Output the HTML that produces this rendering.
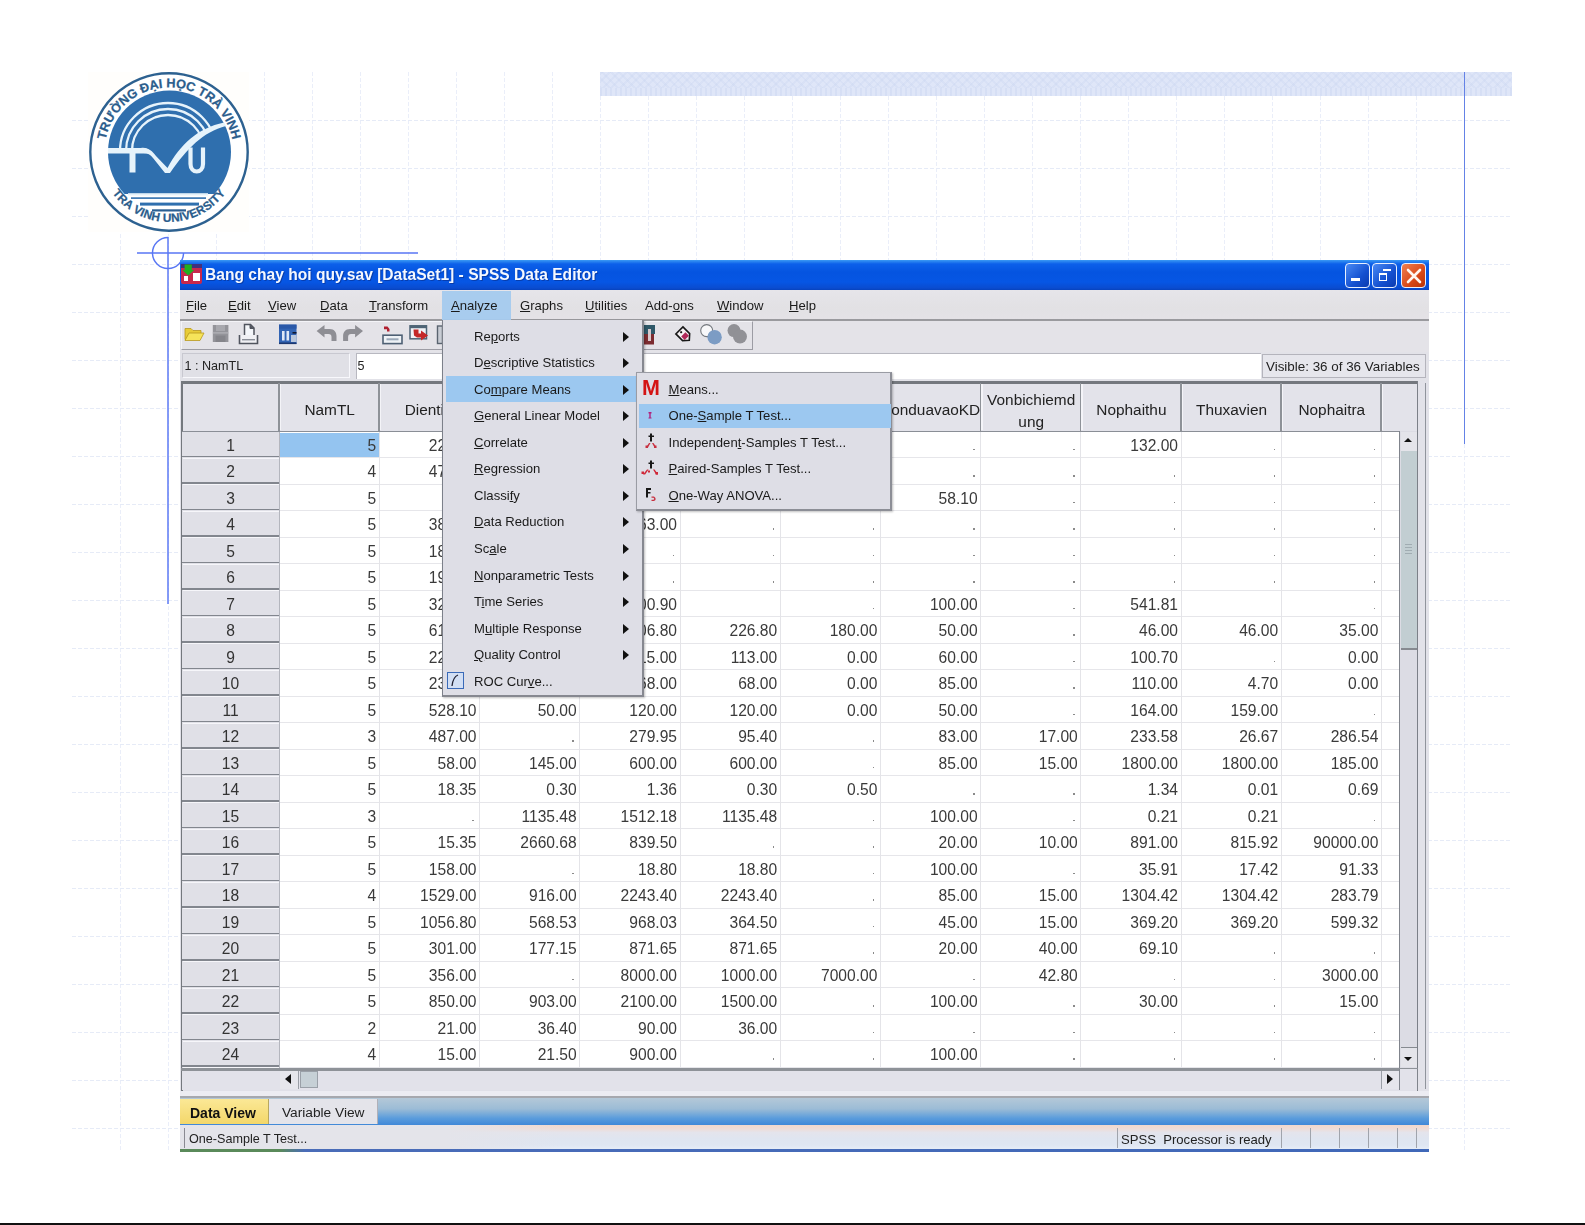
<!DOCTYPE html>
<html><head><meta charset="utf-8"><title>slide</title>
<style>
html,body{margin:0;padding:0;background:#fff;}
body{width:1585px;height:1225px;overflow:hidden;position:relative;font-family:"Liberation Sans", sans-serif;color:#111;}
.abs{position:absolute;}
.t{position:absolute;white-space:nowrap;line-height:1;}
.cell{position:absolute;white-space:nowrap;text-align:right;font-size:15.6px;line-height:26.5px;height:26.5px;color:#3a3a3a;}
.rh{position:absolute;left:182px;width:97px;text-align:center;font-size:15.6px;line-height:26.5px;height:26.5px;color:#333;}
.ch{position:absolute;text-align:center;font-size:15.4px;color:#222;white-space:nowrap;}
.mi{position:absolute;left:474px;font-size:13.1px;color:#1a1a1a;white-space:nowrap;line-height:14px;}
.mi2{position:absolute;left:668.5px;font-size:13.1px;color:#1a1a1a;white-space:nowrap;line-height:14px;}
.mb{position:absolute;top:299px;font-size:13.1px;color:#1a1a1a;white-space:nowrap;line-height:14px;}
u{text-decoration:underline;text-underline-offset:1px;}
.arr{position:absolute;left:623px;width:0;height:0;border-left:6px solid #111;border-top:5px solid transparent;border-bottom:5px solid transparent;}
</style></head><body>
<svg class="abs" style="left:0;top:0" width="1585" height="1225" viewBox="0 0 1585 1225"><g stroke="#e6ebf7" stroke-width="1" stroke-dasharray="4 2" fill="none" shape-rendering="crispEdges"><line x1="120.5" y1="72" x2="120.5" y2="1152" stroke="#eaeef9"/><line x1="168.5" y1="72" x2="168.5" y2="1152" stroke="#eaeef9"/><line x1="216.5" y1="72" x2="216.5" y2="1152" stroke="#eaeef9"/><line x1="264.5" y1="72" x2="264.5" y2="1152" stroke="#eaeef9"/><line x1="312.5" y1="72" x2="312.5" y2="1152" stroke="#eaeef9"/><line x1="360.5" y1="72" x2="360.5" y2="1152" stroke="#eaeef9"/><line x1="408.5" y1="72" x2="408.5" y2="1152" stroke="#eaeef9"/><line x1="456.5" y1="72" x2="456.5" y2="1152" stroke="#eaeef9"/><line x1="504.5" y1="72" x2="504.5" y2="1152" stroke="#eaeef9"/><line x1="552.5" y1="72" x2="552.5" y2="1152" stroke="#eaeef9"/><line x1="600.5" y1="72" x2="600.5" y2="1152" stroke="#eaeef9"/><line x1="648.5" y1="72" x2="648.5" y2="1152" stroke="#eaeef9"/><line x1="696.5" y1="72" x2="696.5" y2="1152" stroke="#eaeef9"/><line x1="744.5" y1="72" x2="744.5" y2="1152" stroke="#eaeef9"/><line x1="792.5" y1="72" x2="792.5" y2="1152" stroke="#eaeef9"/><line x1="840.5" y1="72" x2="840.5" y2="1152" stroke="#eaeef9"/><line x1="888.5" y1="72" x2="888.5" y2="1152" stroke="#eaeef9"/><line x1="936.5" y1="72" x2="936.5" y2="1152" stroke="#eaeef9"/><line x1="984.5" y1="72" x2="984.5" y2="1152" stroke="#eaeef9"/><line x1="1032.5" y1="72" x2="1032.5" y2="1152" stroke="#eaeef9"/><line x1="1080.5" y1="72" x2="1080.5" y2="1152" stroke="#eaeef9"/><line x1="1128.5" y1="72" x2="1128.5" y2="1152" stroke="#eaeef9"/><line x1="1176.5" y1="72" x2="1176.5" y2="1152" stroke="#eaeef9"/><line x1="1224.5" y1="72" x2="1224.5" y2="1152" stroke="#eaeef9"/><line x1="1272.5" y1="72" x2="1272.5" y2="1152" stroke="#eaeef9"/><line x1="1320.5" y1="72" x2="1320.5" y2="1152" stroke="#eaeef9"/><line x1="1368.5" y1="72" x2="1368.5" y2="1152" stroke="#eaeef9"/><line x1="1416.5" y1="72" x2="1416.5" y2="1152" stroke="#eaeef9"/><line x1="1464.5" y1="72" x2="1464.5" y2="1152" stroke="#eaeef9"/><line x1="72" y1="120.5" x2="1512" y2="120.5"/><line x1="72" y1="168.5" x2="1512" y2="168.5"/><line x1="72" y1="216.5" x2="1512" y2="216.5"/><line x1="72" y1="264.5" x2="1512" y2="264.5"/><line x1="72" y1="312.5" x2="1512" y2="312.5"/><line x1="72" y1="360.5" x2="1512" y2="360.5"/><line x1="72" y1="408.5" x2="1512" y2="408.5"/><line x1="72" y1="456.5" x2="1512" y2="456.5"/><line x1="72" y1="504.5" x2="1512" y2="504.5"/><line x1="72" y1="552.5" x2="1512" y2="552.5"/><line x1="72" y1="600.5" x2="1512" y2="600.5"/><line x1="72" y1="648.5" x2="1512" y2="648.5"/><line x1="72" y1="696.5" x2="1512" y2="696.5"/><line x1="72" y1="744.5" x2="1512" y2="744.5"/><line x1="72" y1="792.5" x2="1512" y2="792.5"/><line x1="72" y1="840.5" x2="1512" y2="840.5"/><line x1="72" y1="888.5" x2="1512" y2="888.5"/><line x1="72" y1="936.5" x2="1512" y2="936.5"/><line x1="72" y1="984.5" x2="1512" y2="984.5"/><line x1="72" y1="1032.5" x2="1512" y2="1032.5"/><line x1="72" y1="1080.5" x2="1512" y2="1080.5"/><line x1="72" y1="1128.5" x2="1512" y2="1128.5"/></g></svg>
<div class="abs" style="left:600px;top:72px;width:912px;height:24px;background:#dfe6f8;"></div><div class="abs" style="left:600px;top:72px;width:912px;height:16px;background:repeating-linear-gradient(45deg,rgba(190,204,236,.2) 0 2px,transparent 2px 6px),repeating-linear-gradient(-45deg,rgba(190,204,236,.2) 0 2px,transparent 2px 6px);"></div><div class="abs" style="left:600px;top:88px;width:912px;height:8px;background:repeating-linear-gradient(90deg,rgba(190,204,236,.28) 0 2px,transparent 2px 5px);"></div>
<div class="abs" style="left:1464px;top:72px;width:1.3px;height:372px;background:#6482e6;"></div>
<div class="abs" style="left:88px;top:72px;width:161px;height:160px;background:#fffefc;"></div>
<svg class="abs" style="left:88px;top:72px" width="161" height="160" viewBox="88 72 161 160">
<defs>
<path id="arcTop" d="M 105.45 163 A 64.5 64.5 0 1 1 232.55 163"/>
<path id="arcBot" d="M 108.5 187 A 69.800 69.800 0 0 0 229.5 187"/>
<clipPath id="diskclip"><rect x="100" y="85" width="140" height="109"/></clipPath>
<clipPath id="sailclip"><path d="M100 85 H240 V125 L224 123 C200 128 182 146 167.5 171 L148 150 L100 150 Z"/></clipPath>
</defs>
<circle cx="169" cy="152" r="78.7" fill="#fff" stroke="#2d6190" stroke-width="2.4"/>
<g clip-path="url(#diskclip)"><circle cx="169.5" cy="152" r="61.5" fill="#2f6fae"/></g>
<!-- water lines -->
<rect x="128" y="193.2" width="80" height="2.2" fill="#e4f2fb"/>
<rect x="131" y="197.3" width="75" height="1.6" fill="#2f6fae"/>
<rect x="140" y="202.6" width="59" height="3" fill="#2f6fae"/>
<rect x="152" y="209.3" width="34" height="2.2" fill="#2b5f92"/>
<!-- rainbow arcs -->
<g clip-path="url(#sailclip)" fill="none" stroke="#e6f3fb" stroke-width="2.3">
<circle cx="168" cy="151" r="48"/>
<circle cx="168" cy="151" r="42"/>
<circle cx="168" cy="151" r="36"/>
</g>
<!-- T bar + stem -->
<path d="M108 148 H141 C146 147.5 149 149 152 152.5 L152 154 L147 153.5 H108 Z" fill="#e6f3fb"/>
<rect x="129.5" y="152" width="6" height="20.5" fill="#e6f3fb"/>
<!-- V check / sail sweep -->
<path d="M141 148 C148 147 152 151 156 156 L167.5 168 C180 144.5 198 128 224 122.5 L226 126 C203 132 187 148.500 170 173 L165 173 L153 158 C150 154 147 152.5 141 153 Z" fill="#e6f3fb"/>
<!-- U -->
<path d="M190.5 147.5 V164 C190.5 174 203 174 203 164 V147.5" fill="none" stroke="#e6f3fb" stroke-width="4.2"/>
<!-- ring text -->
<text font-family="'Liberation Sans', sans-serif" font-weight="bold" font-size="12.7" fill="#2b5d8c" stroke="#2b5d8c" stroke-width="0.25" letter-spacing="0"><textPath href="#arcTop" startOffset="50%" text-anchor="middle">TRƯỜNG ĐẠI HỌC TRÀ VINH</textPath></text>
<text font-family="'Liberation Sans', sans-serif" font-weight="bold" font-size="11.8" fill="#2b5d8c" stroke="#2b5d8c" stroke-width="0.25" letter-spacing="0.15"><textPath href="#arcBot" startOffset="50%" text-anchor="middle">TRA VINH UNIVERSITY</textPath></text>
</svg>

<svg class="abs" style="left:130px;top:230px" width="300" height="380" viewBox="130 230 300 380"><g stroke="#5876f4" stroke-width="1.45" fill="none"><line x1="137" y1="253" x2="418" y2="253"/><line x1="168" y1="237" x2="168" y2="604"/><path d="M168 237.5 A15.5 15.5 0 1 0 183.5 253"/></g></svg>
<div id="spss" style="position:absolute;left:0;top:0;width:1585px;height:1225px;filter:blur(0.4px);">
<div class="abs" id="win" style="left:180px;top:260px;width:1249px;height:892px;background:#e2e2e9;"></div>
<div class="abs" style="left:180px;top:259.5px;width:1249px;height:30.5px;background:linear-gradient(#3a9af4 0,#0c60ea 4px,#0554e0 12px,#0656e4 22px,#0a4cd0 28px,#0640b8 30.5px);"></div>
<div class="t" id="title" style="left:205px;top:266.6px;font-size:15.6px;font-weight:bold;color:#f4f8ff;letter-spacing:0px;text-shadow:1px 1px 0 rgba(10,42,128,.55);">Bang chay hoi quy.sav [DataSet1] - SPSS Data Editor</div>
<svg class="abs" style="left:181px;top:263px" width="22" height="22" viewBox="0 0 22 22"><rect x="0" y="1" width="21" height="20" rx="2" fill="#c8284c"/><rect x="0" y="1" width="21" height="4" fill="#40307c"/><path d="M2 3h9v7h3l-7.5 7-7.5-7h3z" fill="#20b020" transform="translate(2,-1) scale(.8)"/><rect x="3" y="13" width="4" height="5" fill="#fff"/><rect x="12" y="10" width="7" height="8" fill="#fff"/></svg>
<div class="abs" style="left:1345px;top:263px;width:23px;height:23px;border:1.5px solid #e8f0ff;border-radius:4px;background:linear-gradient(135deg,#4a8af4,#1450d0 60%,#0c3cb0);box-sizing:content-box;"></div><div class="abs" style="left:1350.5px;top:278px;width:9.5px;height:2.6px;background:#fff;"></div><div class="abs" style="left:1372px;top:263px;width:23px;height:23px;border:1.5px solid #e8f0ff;border-radius:4px;background:linear-gradient(135deg,#4a8af4,#1450d0 60%,#0c3cb0);box-sizing:content-box;"></div><div class="abs" style="left:1378.5px;top:272.5px;width:6px;height:5px;border:1.5px solid #fff;border-top-width:2px;"></div><div class="abs" style="left:1383px;top:268.800px;width:7.5px;height:1.8px;background:#fff;"></div><div class="abs" style="left:1401px;top:263px;width:23px;height:23px;border:1.5px solid #e8f0ff;border-radius:4px;background:linear-gradient(135deg,#f08050,#d84818 60%,#b83408);box-sizing:content-box;"></div><svg class="abs" style="left:1404px;top:266px" width="20" height="20" viewBox="0 0 20 20"><path d="M4 4L16 16M16 4L4 16" stroke="#fff6f0" stroke-width="2.6" stroke-linecap="round"/></svg>
<div class="abs" style="left:180px;top:290px;width:1249px;height:29px;background:linear-gradient(#e6e5ea,#e2e1e4 60%,#e4e2e6);"></div>
<div class="abs" style="left:180px;top:319px;width:1249px;height:1.5px;background:#9a9a9e;"></div>
<div class="abs" style="left:442px;top:291px;width:69px;height:29px;background:#a8ccee;"></div>
<div class="mb" style="left:186px"><u>F</u>ile</div><div class="mb" style="left:228px"><u>E</u>dit</div><div class="mb" style="left:268px"><u>V</u>iew</div><div class="mb" style="left:320px"><u>D</u>ata</div><div class="mb" style="left:369px"><u>T</u>ransform</div><div class="mb" style="left:451px"><u>A</u>nalyze</div><div class="mb" style="left:520px"><u>G</u>raphs</div><div class="mb" style="left:585px"><u>U</u>tilities</div><div class="mb" style="left:645px">Add-<u>o</u>ns</div><div class="mb" style="left:717px"><u>W</u>indow</div><div class="mb" style="left:789px"><u>H</u>elp</div>
<div class="abs" style="left:180px;top:321px;width:1249px;height:31px;background:#e4e3e8;"></div>
<div class="abs" style="left:181px;top:321px;width:572px;height:29px;border:1.5px solid #9c9ca4;border-top:1px solid #f4f4f8;border-left:1px solid #f4f4f8;box-sizing:border-box;"></div>
<svg class="abs" style="left:180px;top:321px" width="580" height="30" viewBox="180 321 580 30">
<!-- open folder -->
<path d="M185 328.5 h6 l2 2 h8 v3 h-12 l-3 6 h-1 z" fill="#e8cc38" stroke="#b89820" stroke-width=".8"/>
<path d="M189 333 h15 l-4 7.5 h-15 z" fill="#f6e45a" stroke="#b89820" stroke-width=".8"/>
<!-- save (disabled) -->
<rect x="212.8" y="325" width="15.6" height="17" fill="#94949a"/>
<rect x="216" y="325" width="9" height="6" fill="#a8a8ae"/>
<rect x="215.5" y="335.5" width="10" height="6.5" fill="#85858b"/>
<rect x="212.8" y="332.3" width="15.6" height="1.2" fill="#b4b4ba"/>
<!-- print -->
<path d="M244.5 335 V324.5 h6 l3.5 3.5 V335" fill="#f4f6fa" stroke="#50545e" stroke-width="1.5"/>
<path d="M250 324.5 v4 h4" fill="#50545e" stroke="#50545e" stroke-width="1"/>
<path d="M239.5 335 V343.5 H257.5 V335" fill="#f0f0f4" stroke="#50545e" stroke-width="1.6"/>
<rect x="242" y="339" width="13" height="1.4" fill="#8a8e98"/>
<!-- dialog recall -->
<rect x="279" y="324.6" width="17.5" height="19.4" fill="#3264b4"/>
<rect x="279" y="324.6" width="17.5" height="4" fill="#2a58a8"/>
<rect x="282" y="331" width="2.6" height="9.5" fill="#dfe8f6"/>
<rect x="286.5" y="331" width="2.6" height="9.5" fill="#dfe8f6"/>
<rect x="291" y="335" width="5.5" height="7" fill="#b8c6dc"/>
<rect x="292.5" y="332" width="4" height="1.6" fill="#101830"/>
<rect x="279" y="342.5" width="17.5" height="1.6" fill="#1c3870"/>
<!-- undo -->
<path d="M316.6 331 L324.5 325 V329 H329.5 C334.5 329 336.5 332.5 336.5 336 V341 H331.5 V337 C331.5 335 330.5 334 328.5 334 H324.5 V337.5 Z" fill="#8e8e94"/>
<!-- redo -->
<path d="M363 331 L355.1 325 V329 H350.1 C345.1 329 343.1 332.5 343.1 336 V341 H348.1 V337 C348.1 335 349.1 334 351.1 334 H355.1 V337.5 Z" fill="#8e8e94"/>
<!-- goto case -->
<path d="M384 326.5 h3.5 l2 2.5 v2.5 h-2.5 v-2.2 h-3 z" fill="#b02030"/>
<rect x="383" y="335.2" width="19" height="8.4" fill="#eef2f6" stroke="#4e6074" stroke-width="1.6"/>
<rect x="386.5" y="338.3" width="12" height="2" fill="#9aa8b8"/>
<!-- goto variable -->
<rect x="410" y="325.8" width="16.5" height="13" fill="#f0f2f6" stroke="#4e6476" stroke-width="1.5"/>
<rect x="410" y="325.8" width="16.5" height="2.4" fill="#4e6476"/>
<path d="M413.5 329.5 h5 v4 h2.5 v-3 l7 5 l-7 5 v-3 h-4 l-3 -2 z" fill="#c42828"/>
<!-- partial icon left of menu -->
<rect x="437.5" y="326" width="5" height="17.5" fill="#c8ccd4" stroke="#5a6470" stroke-width="1.4"/>
<!-- partial icon right of menu -->
<rect x="644" y="325" width="11" height="9" fill="#2e5868"/>
<rect x="644" y="334" width="10" height="10.5" fill="#7c2c30"/>
<rect x="648" y="329" width="3" height="12" fill="#d8c8cc"/>
<!-- value labels (tag) -->
<g transform="rotate(45 684 335)"><path d="M677.5 330 h9.5 l4.5 5 l-4.5 5 h-9.5 z" fill="#f6f2f4" stroke="#181818" stroke-width="1.6"/><rect x="683" y="332" width="5" height="6" fill="#b02858"/><circle cx="680" cy="335" r="1.1" fill="#181818"/></g>
<!-- use sets -->
<circle cx="706.7" cy="330.6" r="6" fill="#f8f8fa" stroke="#74787e" stroke-width="1.1"/>
<circle cx="714.6" cy="337.2" r="7.2" fill="#7c9cc4"/>
<!-- show all (disabled) -->
<circle cx="734" cy="330.6" r="6.5" fill="#919196"/>
<circle cx="740" cy="336.6" r="7" fill="#919196"/>
</svg>

<div class="abs" style="left:180px;top:352px;width:1249px;height:30px;background:#e2e2e8;"></div>
<div class="abs" style="left:182px;top:353px;width:168px;height:25px;background:#e0e0e6;border:1px solid #c8c8d0;border-bottom-color:#f8f8fc;border-right-color:#f8f8fc;box-sizing:border-box;"></div>
<div class="abs" style="left:356px;top:353px;width:905px;height:26px;background:#fff;border-top:1px solid #b8b8c0;border-left:1px solid #b8b8c0;box-sizing:border-box;"></div>
<div class="t" style="left:184.5px;top:359.5px;font-size:12.6px;color:#222;">1 : NamTL</div>
<div class="t" style="left:357.5px;top:359.5px;font-size:12.6px;color:#222;">5</div>
<div class="abs" style="left:1262px;top:354px;width:164px;height:24px;background:#e6e6ec;border:1px solid #b4b4bc;box-sizing:border-box;"></div>
<div class="t" id="vis" style="left:1266px;top:360px;font-size:13.4px;color:#222;">Visible: 36 of 36 Variables</div>
<div class="abs" style="left:181px;top:381px;width:1245px;height:710px;background:#e0e0e8;"></div>
<div class="abs" style="left:279px;top:431px;width:1121px;height:637px;background:#fff;"></div>
<div class="abs" style="left:182px;top:383px;width:1235px;height:48px;background:#e3e3ea;"></div>
<div class="abs" style="left:181px;top:381px;width:1237px;height:2.5px;background:#74787e;"></div>
<div class="abs" style="left:181px;top:381px;width:1.5px;height:710px;background:#74787e;"></div>
<div class="abs" style="left:182px;top:430.6px;width:1218px;height:1.8px;background:#8a8e96;"></div>
<div class="abs" style="left:182px;top:432px;width:97px;height:636px;background:#e0e0e7;"></div>
<div class="abs" style="left:279px;top:457.0px;width:1121px;height:1px;background:#e6e6ea;"></div><div class="abs" style="left:182px;top:455.9px;width:97px;height:1.6px;background:#82868e;"></div><div class="abs" style="left:183px;top:457.7px;width:96px;height:1px;background:#f6f6fa;"></div><div class="abs" style="left:279px;top:483.5px;width:1121px;height:1px;background:#e6e6ea;"></div><div class="abs" style="left:182px;top:482.4px;width:97px;height:1.6px;background:#82868e;"></div><div class="abs" style="left:183px;top:484.2px;width:96px;height:1px;background:#f6f6fa;"></div><div class="abs" style="left:279px;top:510.0px;width:1121px;height:1px;background:#e6e6ea;"></div><div class="abs" style="left:182px;top:508.9px;width:97px;height:1.6px;background:#82868e;"></div><div class="abs" style="left:183px;top:510.7px;width:96px;height:1px;background:#f6f6fa;"></div><div class="abs" style="left:279px;top:536.5px;width:1121px;height:1px;background:#e6e6ea;"></div><div class="abs" style="left:182px;top:535.4px;width:97px;height:1.6px;background:#82868e;"></div><div class="abs" style="left:183px;top:537.2px;width:96px;height:1px;background:#f6f6fa;"></div><div class="abs" style="left:279px;top:563.0px;width:1121px;height:1px;background:#e6e6ea;"></div><div class="abs" style="left:182px;top:561.9px;width:97px;height:1.6px;background:#82868e;"></div><div class="abs" style="left:183px;top:563.7px;width:96px;height:1px;background:#f6f6fa;"></div><div class="abs" style="left:279px;top:589.5px;width:1121px;height:1px;background:#e6e6ea;"></div><div class="abs" style="left:182px;top:588.4px;width:97px;height:1.6px;background:#82868e;"></div><div class="abs" style="left:183px;top:590.2px;width:96px;height:1px;background:#f6f6fa;"></div><div class="abs" style="left:279px;top:616.0px;width:1121px;height:1px;background:#e6e6ea;"></div><div class="abs" style="left:182px;top:614.9px;width:97px;height:1.6px;background:#82868e;"></div><div class="abs" style="left:183px;top:616.7px;width:96px;height:1px;background:#f6f6fa;"></div><div class="abs" style="left:279px;top:642.5px;width:1121px;height:1px;background:#e6e6ea;"></div><div class="abs" style="left:182px;top:641.4px;width:97px;height:1.6px;background:#82868e;"></div><div class="abs" style="left:183px;top:643.2px;width:96px;height:1px;background:#f6f6fa;"></div><div class="abs" style="left:279px;top:669.0px;width:1121px;height:1px;background:#e6e6ea;"></div><div class="abs" style="left:182px;top:667.9px;width:97px;height:1.6px;background:#82868e;"></div><div class="abs" style="left:183px;top:669.7px;width:96px;height:1px;background:#f6f6fa;"></div><div class="abs" style="left:279px;top:695.5px;width:1121px;height:1px;background:#e6e6ea;"></div><div class="abs" style="left:182px;top:694.4px;width:97px;height:1.6px;background:#82868e;"></div><div class="abs" style="left:183px;top:696.2px;width:96px;height:1px;background:#f6f6fa;"></div><div class="abs" style="left:279px;top:722.0px;width:1121px;height:1px;background:#e6e6ea;"></div><div class="abs" style="left:182px;top:720.9px;width:97px;height:1.6px;background:#82868e;"></div><div class="abs" style="left:183px;top:722.7px;width:96px;height:1px;background:#f6f6fa;"></div><div class="abs" style="left:279px;top:748.5px;width:1121px;height:1px;background:#e6e6ea;"></div><div class="abs" style="left:182px;top:747.4px;width:97px;height:1.6px;background:#82868e;"></div><div class="abs" style="left:183px;top:749.2px;width:96px;height:1px;background:#f6f6fa;"></div><div class="abs" style="left:279px;top:775.0px;width:1121px;height:1px;background:#e6e6ea;"></div><div class="abs" style="left:182px;top:773.9px;width:97px;height:1.6px;background:#82868e;"></div><div class="abs" style="left:183px;top:775.7px;width:96px;height:1px;background:#f6f6fa;"></div><div class="abs" style="left:279px;top:801.5px;width:1121px;height:1px;background:#e6e6ea;"></div><div class="abs" style="left:182px;top:800.4px;width:97px;height:1.6px;background:#82868e;"></div><div class="abs" style="left:183px;top:802.2px;width:96px;height:1px;background:#f6f6fa;"></div><div class="abs" style="left:279px;top:828.0px;width:1121px;height:1px;background:#e6e6ea;"></div><div class="abs" style="left:182px;top:826.9px;width:97px;height:1.6px;background:#82868e;"></div><div class="abs" style="left:183px;top:828.7px;width:96px;height:1px;background:#f6f6fa;"></div><div class="abs" style="left:279px;top:854.5px;width:1121px;height:1px;background:#e6e6ea;"></div><div class="abs" style="left:182px;top:853.4px;width:97px;height:1.6px;background:#82868e;"></div><div class="abs" style="left:183px;top:855.2px;width:96px;height:1px;background:#f6f6fa;"></div><div class="abs" style="left:279px;top:881.0px;width:1121px;height:1px;background:#e6e6ea;"></div><div class="abs" style="left:182px;top:879.9px;width:97px;height:1.6px;background:#82868e;"></div><div class="abs" style="left:183px;top:881.7px;width:96px;height:1px;background:#f6f6fa;"></div><div class="abs" style="left:279px;top:907.5px;width:1121px;height:1px;background:#e6e6ea;"></div><div class="abs" style="left:182px;top:906.4px;width:97px;height:1.6px;background:#82868e;"></div><div class="abs" style="left:183px;top:908.2px;width:96px;height:1px;background:#f6f6fa;"></div><div class="abs" style="left:279px;top:934.0px;width:1121px;height:1px;background:#e6e6ea;"></div><div class="abs" style="left:182px;top:932.9px;width:97px;height:1.6px;background:#82868e;"></div><div class="abs" style="left:183px;top:934.7px;width:96px;height:1px;background:#f6f6fa;"></div><div class="abs" style="left:279px;top:960.5px;width:1121px;height:1px;background:#e6e6ea;"></div><div class="abs" style="left:182px;top:959.4px;width:97px;height:1.6px;background:#82868e;"></div><div class="abs" style="left:183px;top:961.2px;width:96px;height:1px;background:#f6f6fa;"></div><div class="abs" style="left:279px;top:987.0px;width:1121px;height:1px;background:#e6e6ea;"></div><div class="abs" style="left:182px;top:985.9px;width:97px;height:1.6px;background:#82868e;"></div><div class="abs" style="left:183px;top:987.7px;width:96px;height:1px;background:#f6f6fa;"></div><div class="abs" style="left:279px;top:1013.5px;width:1121px;height:1px;background:#e6e6ea;"></div><div class="abs" style="left:182px;top:1012.4px;width:97px;height:1.6px;background:#82868e;"></div><div class="abs" style="left:183px;top:1014.2px;width:96px;height:1px;background:#f6f6fa;"></div><div class="abs" style="left:279px;top:1040.0px;width:1121px;height:1px;background:#e6e6ea;"></div><div class="abs" style="left:182px;top:1038.9px;width:97px;height:1.6px;background:#82868e;"></div><div class="abs" style="left:183px;top:1040.7px;width:96px;height:1px;background:#f6f6fa;"></div><div class="abs" style="left:279px;top:1066.5px;width:1121px;height:1px;background:#e6e6ea;"></div><div class="abs" style="left:182px;top:1065.4px;width:97px;height:1.6px;background:#82868e;"></div><div class="abs" style="left:183px;top:1067.2px;width:96px;height:1px;background:#f6f6fa;"></div>
<div class="abs" style="left:278.0px;top:383px;width:1.5px;height:48px;background:#8e9298;"></div><div class="abs" style="left:279.5px;top:384px;width:1.5px;height:46px;background:#f4f4f8;"></div><div class="abs" style="left:378.8px;top:432px;width:1px;height:636px;background:#e4e4e8;"></div><div class="abs" style="left:378.3px;top:383px;width:1.5px;height:48px;background:#8e9298;"></div><div class="abs" style="left:379.8px;top:384px;width:1.5px;height:46px;background:#f4f4f8;"></div><div class="abs" style="left:479.0px;top:432px;width:1px;height:636px;background:#e4e4e8;"></div><div class="abs" style="left:478.5px;top:383px;width:1.5px;height:48px;background:#8e9298;"></div><div class="abs" style="left:480.0px;top:384px;width:1.5px;height:46px;background:#f4f4f8;"></div><div class="abs" style="left:579.2px;top:432px;width:1px;height:636px;background:#e4e4e8;"></div><div class="abs" style="left:578.7px;top:383px;width:1.5px;height:48px;background:#8e9298;"></div><div class="abs" style="left:580.2px;top:384px;width:1.5px;height:46px;background:#f4f4f8;"></div><div class="abs" style="left:679.5px;top:432px;width:1px;height:636px;background:#e4e4e8;"></div><div class="abs" style="left:679.0px;top:383px;width:1.5px;height:48px;background:#8e9298;"></div><div class="abs" style="left:680.5px;top:384px;width:1.5px;height:46px;background:#f4f4f8;"></div><div class="abs" style="left:779.7px;top:432px;width:1px;height:636px;background:#e4e4e8;"></div><div class="abs" style="left:779.2px;top:383px;width:1.5px;height:48px;background:#8e9298;"></div><div class="abs" style="left:780.7px;top:384px;width:1.5px;height:46px;background:#f4f4f8;"></div><div class="abs" style="left:879.9px;top:432px;width:1px;height:636px;background:#e4e4e8;"></div><div class="abs" style="left:879.4px;top:383px;width:1.5px;height:48px;background:#8e9298;"></div><div class="abs" style="left:880.9px;top:384px;width:1.5px;height:46px;background:#f4f4f8;"></div><div class="abs" style="left:980.1px;top:432px;width:1px;height:636px;background:#e4e4e8;"></div><div class="abs" style="left:979.6px;top:383px;width:1.5px;height:48px;background:#8e9298;"></div><div class="abs" style="left:981.1px;top:384px;width:1.5px;height:46px;background:#f4f4f8;"></div><div class="abs" style="left:1080.3px;top:432px;width:1px;height:636px;background:#e4e4e8;"></div><div class="abs" style="left:1079.8px;top:383px;width:1.5px;height:48px;background:#8e9298;"></div><div class="abs" style="left:1081.3px;top:384px;width:1.5px;height:46px;background:#f4f4f8;"></div><div class="abs" style="left:1180.5px;top:432px;width:1px;height:636px;background:#e4e4e8;"></div><div class="abs" style="left:1180.0px;top:383px;width:1.5px;height:48px;background:#8e9298;"></div><div class="abs" style="left:1181.5px;top:384px;width:1.5px;height:46px;background:#f4f4f8;"></div><div class="abs" style="left:1280.7px;top:432px;width:1px;height:636px;background:#e4e4e8;"></div><div class="abs" style="left:1280.2px;top:383px;width:1.5px;height:48px;background:#8e9298;"></div><div class="abs" style="left:1281.7px;top:384px;width:1.5px;height:46px;background:#f4f4f8;"></div><div class="abs" style="left:1380.9px;top:432px;width:1px;height:636px;background:#e4e4e8;"></div><div class="abs" style="left:1380.4px;top:383px;width:1.5px;height:48px;background:#8e9298;"></div><div class="abs" style="left:1381.9px;top:384px;width:1.5px;height:46px;background:#f4f4f8;"></div><div class="abs" style="left:278.5px;top:432px;width:1px;height:636px;background:#b4b6be;"></div>
<div class="abs" style="left:280px;top:432.5px;width:99px;height:24.5px;background:#94c4f0;"></div>
<div class="ch" style="left:280.0px;width:99.3px;top:401px;line-height:18px;overflow:hidden;">NamTL</div><div class="ch" style="left:382.9px;width:99.2px;top:401px;line-height:18px;overflow:hidden;">Dientich</div><div class="ch" style="left:480.5px;width:99.2px;top:401px;line-height:18px;overflow:hidden;">Vonvay</div><div class="ch" style="left:580.7px;width:99.3px;top:401px;line-height:18px;overflow:hidden;">Tongvon</div><div class="ch" style="left:681.0px;width:99.2px;top:401px;line-height:18px;overflow:hidden;">Vontuco</div><div class="ch" style="left:781.2px;width:99.2px;top:401px;line-height:18px;overflow:hidden;">Vonkhac</div><div class="ch" style="left:881.4px;width:99.2px;top:401px;line-height:18px;overflow:hidden;">VonduavaoKD</div><div class="ch" style="left:981.6px;width:99.2px;top:389px;line-height:21.5px;overflow:hidden;">Vonbichiemd<br>ung</div><div class="ch" style="left:1081.8px;width:99.2px;top:401px;line-height:18px;overflow:hidden;">Nophaithu</div><div class="ch" style="left:1182.0px;width:99.2px;top:401px;line-height:18px;overflow:hidden;">Thuxavien</div><div class="ch" style="left:1282.2px;width:99.2px;top:401px;line-height:18px;overflow:hidden;">Nophaitra</div>
<div class="rh" style="top:432.7px">1</div><div class="cell" style="left:279.0px;width:97.3px;top:432.7px">5</div><div class="cell" style="left:379.3px;width:97.2px;top:432.7px">225.00</div><div class="cell" style="left:479.5px;width:97.2px;top:432.7px">35.00</div><div class="cell" style="left:579.7px;width:97.3px;top:432.7px">153.00</div><div class="abs" style="left:772.7px;top:448.8px;width:1.6px;height:1.6px;background:#8a8a8a;"></div><div class="abs" style="left:872.9px;top:448.8px;width:1.6px;height:1.6px;background:#8a8a8a;"></div><div class="abs" style="left:973.1px;top:448.8px;width:1.6px;height:1.6px;background:#8a8a8a;"></div><div class="abs" style="left:1073.3px;top:448.8px;width:1.6px;height:1.6px;background:#8a8a8a;"></div><div class="cell" style="left:1080.8px;width:97.2px;top:432.7px">132.00</div><div class="abs" style="left:1273.7px;top:448.8px;width:1.6px;height:1.6px;background:#8a8a8a;"></div><div class="abs" style="left:1373.9px;top:448.8px;width:1.6px;height:1.6px;background:#8a8a8a;"></div>
<div class="rh" style="top:459.2px">2</div><div class="cell" style="left:279.0px;width:97.3px;top:459.2px">4</div><div class="cell" style="left:379.3px;width:97.2px;top:459.2px">475.00</div><div class="cell" style="left:479.5px;width:97.2px;top:459.2px">35.00</div><div class="cell" style="left:579.7px;width:97.3px;top:459.2px">153.00</div><div class="abs" style="left:772.7px;top:475.3px;width:1.6px;height:1.6px;background:#8a8a8a;"></div><div class="abs" style="left:872.9px;top:475.3px;width:1.6px;height:1.6px;background:#8a8a8a;"></div><div class="abs" style="left:973.1px;top:475.3px;width:1.6px;height:1.6px;background:#8a8a8a;"></div><div class="abs" style="left:1073.3px;top:475.3px;width:1.6px;height:1.6px;background:#8a8a8a;"></div><div class="abs" style="left:1173.5px;top:475.3px;width:1.6px;height:1.6px;background:#8a8a8a;"></div><div class="abs" style="left:1273.7px;top:475.3px;width:1.6px;height:1.6px;background:#8a8a8a;"></div><div class="abs" style="left:1373.9px;top:475.3px;width:1.6px;height:1.6px;background:#8a8a8a;"></div>
<div class="rh" style="top:485.7px">3</div><div class="cell" style="left:279.0px;width:97.3px;top:485.7px">5</div><div class="abs" style="left:472.0px;top:501.8px;width:1.6px;height:1.6px;background:#8a8a8a;"></div><div class="cell" style="left:479.5px;width:97.2px;top:485.7px">35.00</div><div class="cell" style="left:579.7px;width:97.3px;top:485.7px">153.00</div><div class="abs" style="left:772.7px;top:501.8px;width:1.6px;height:1.6px;background:#8a8a8a;"></div><div class="abs" style="left:872.9px;top:501.8px;width:1.6px;height:1.6px;background:#8a8a8a;"></div><div class="cell" style="left:880.4px;width:97.2px;top:485.7px">58.10</div><div class="abs" style="left:1073.3px;top:501.8px;width:1.6px;height:1.6px;background:#8a8a8a;"></div><div class="abs" style="left:1173.5px;top:501.8px;width:1.6px;height:1.6px;background:#8a8a8a;"></div><div class="abs" style="left:1273.7px;top:501.8px;width:1.6px;height:1.6px;background:#8a8a8a;"></div><div class="abs" style="left:1373.9px;top:501.8px;width:1.6px;height:1.6px;background:#8a8a8a;"></div>
<div class="rh" style="top:512.2px">4</div><div class="cell" style="left:279.0px;width:97.3px;top:512.2px">5</div><div class="cell" style="left:379.3px;width:97.2px;top:512.2px">385.00</div><div class="cell" style="left:479.5px;width:97.2px;top:512.2px">35.00</div><div class="cell" style="left:579.7px;width:97.3px;top:512.2px">163.00</div><div class="abs" style="left:772.7px;top:528.3px;width:1.6px;height:1.6px;background:#8a8a8a;"></div><div class="abs" style="left:872.9px;top:528.3px;width:1.6px;height:1.6px;background:#8a8a8a;"></div><div class="abs" style="left:973.1px;top:528.3px;width:1.6px;height:1.6px;background:#8a8a8a;"></div><div class="abs" style="left:1073.3px;top:528.3px;width:1.6px;height:1.6px;background:#8a8a8a;"></div><div class="abs" style="left:1173.5px;top:528.3px;width:1.6px;height:1.6px;background:#8a8a8a;"></div><div class="abs" style="left:1273.7px;top:528.3px;width:1.6px;height:1.6px;background:#8a8a8a;"></div><div class="abs" style="left:1373.9px;top:528.3px;width:1.6px;height:1.6px;background:#8a8a8a;"></div>
<div class="rh" style="top:538.7px">5</div><div class="cell" style="left:279.0px;width:97.3px;top:538.7px">5</div><div class="cell" style="left:379.3px;width:97.2px;top:538.7px">185.00</div><div class="abs" style="left:572.2px;top:554.8px;width:1.6px;height:1.6px;background:#8a8a8a;"></div><div class="abs" style="left:672.5px;top:554.8px;width:1.6px;height:1.6px;background:#8a8a8a;"></div><div class="abs" style="left:772.7px;top:554.8px;width:1.6px;height:1.6px;background:#8a8a8a;"></div><div class="abs" style="left:872.9px;top:554.8px;width:1.6px;height:1.6px;background:#8a8a8a;"></div><div class="abs" style="left:973.1px;top:554.8px;width:1.6px;height:1.6px;background:#8a8a8a;"></div><div class="abs" style="left:1073.3px;top:554.8px;width:1.6px;height:1.6px;background:#8a8a8a;"></div><div class="abs" style="left:1173.5px;top:554.8px;width:1.6px;height:1.6px;background:#8a8a8a;"></div><div class="abs" style="left:1273.7px;top:554.8px;width:1.6px;height:1.6px;background:#8a8a8a;"></div><div class="abs" style="left:1373.9px;top:554.8px;width:1.6px;height:1.6px;background:#8a8a8a;"></div>
<div class="rh" style="top:565.2px">6</div><div class="cell" style="left:279.0px;width:97.3px;top:565.2px">5</div><div class="cell" style="left:379.3px;width:97.2px;top:565.2px">195.00</div><div class="abs" style="left:572.2px;top:581.3px;width:1.6px;height:1.6px;background:#8a8a8a;"></div><div class="abs" style="left:672.5px;top:581.3px;width:1.6px;height:1.6px;background:#8a8a8a;"></div><div class="abs" style="left:772.7px;top:581.3px;width:1.6px;height:1.6px;background:#8a8a8a;"></div><div class="abs" style="left:872.9px;top:581.3px;width:1.6px;height:1.6px;background:#8a8a8a;"></div><div class="abs" style="left:973.1px;top:581.3px;width:1.6px;height:1.6px;background:#8a8a8a;"></div><div class="abs" style="left:1073.3px;top:581.3px;width:1.6px;height:1.6px;background:#8a8a8a;"></div><div class="abs" style="left:1173.5px;top:581.3px;width:1.6px;height:1.6px;background:#8a8a8a;"></div><div class="abs" style="left:1273.7px;top:581.3px;width:1.6px;height:1.6px;background:#8a8a8a;"></div><div class="abs" style="left:1373.9px;top:581.3px;width:1.6px;height:1.6px;background:#8a8a8a;"></div>
<div class="rh" style="top:591.7px">7</div><div class="cell" style="left:279.0px;width:97.3px;top:591.7px">5</div><div class="cell" style="left:379.3px;width:97.2px;top:591.7px">325.00</div><div class="cell" style="left:479.5px;width:97.2px;top:591.7px">35.00</div><div class="cell" style="left:579.7px;width:97.3px;top:591.7px">100.90</div><div class="abs" style="left:872.9px;top:607.8px;width:1.6px;height:1.6px;background:#8a8a8a;"></div><div class="cell" style="left:880.4px;width:97.2px;top:591.7px">100.00</div><div class="abs" style="left:1073.3px;top:607.8px;width:1.6px;height:1.6px;background:#8a8a8a;"></div><div class="cell" style="left:1080.8px;width:97.2px;top:591.7px">541.81</div><div class="abs" style="left:1373.9px;top:607.8px;width:1.6px;height:1.6px;background:#8a8a8a;"></div>
<div class="rh" style="top:618.2px">8</div><div class="cell" style="left:279.0px;width:97.3px;top:618.2px">5</div><div class="cell" style="left:379.3px;width:97.2px;top:618.2px">615.00</div><div class="cell" style="left:479.5px;width:97.2px;top:618.2px">35.00</div><div class="cell" style="left:579.7px;width:97.3px;top:618.2px">406.80</div><div class="cell" style="left:680.0px;width:97.2px;top:618.2px">226.80</div><div class="cell" style="left:780.2px;width:97.2px;top:618.2px">180.00</div><div class="cell" style="left:880.4px;width:97.2px;top:618.2px">50.00</div><div class="abs" style="left:1073.3px;top:634.3px;width:1.6px;height:1.6px;background:#8a8a8a;"></div><div class="cell" style="left:1080.8px;width:97.2px;top:618.2px">46.00</div><div class="cell" style="left:1181.0px;width:97.2px;top:618.2px">46.00</div><div class="cell" style="left:1281.2px;width:97.2px;top:618.2px">35.00</div>
<div class="rh" style="top:644.7px">9</div><div class="cell" style="left:279.0px;width:97.3px;top:644.7px">5</div><div class="cell" style="left:379.3px;width:97.2px;top:644.7px">225.00</div><div class="cell" style="left:479.5px;width:97.2px;top:644.7px">35.00</div><div class="cell" style="left:579.7px;width:97.3px;top:644.7px">115.00</div><div class="cell" style="left:680.0px;width:97.2px;top:644.7px">113.00</div><div class="cell" style="left:780.2px;width:97.2px;top:644.7px">0.00</div><div class="cell" style="left:880.4px;width:97.2px;top:644.7px">60.00</div><div class="abs" style="left:1073.3px;top:660.8px;width:1.6px;height:1.6px;background:#8a8a8a;"></div><div class="cell" style="left:1080.8px;width:97.2px;top:644.7px">100.70</div><div class="abs" style="left:1273.7px;top:660.8px;width:1.6px;height:1.6px;background:#8a8a8a;"></div><div class="cell" style="left:1281.2px;width:97.2px;top:644.7px">0.00</div>
<div class="rh" style="top:671.2px">10</div><div class="cell" style="left:279.0px;width:97.3px;top:671.2px">5</div><div class="cell" style="left:379.3px;width:97.2px;top:671.2px">235.00</div><div class="cell" style="left:479.5px;width:97.2px;top:671.2px">35.00</div><div class="cell" style="left:579.7px;width:97.3px;top:671.2px">168.00</div><div class="cell" style="left:680.0px;width:97.2px;top:671.2px">68.00</div><div class="cell" style="left:780.2px;width:97.2px;top:671.2px">0.00</div><div class="cell" style="left:880.4px;width:97.2px;top:671.2px">85.00</div><div class="abs" style="left:1073.3px;top:687.3px;width:1.6px;height:1.6px;background:#8a8a8a;"></div><div class="cell" style="left:1080.8px;width:97.2px;top:671.2px">110.00</div><div class="cell" style="left:1181.0px;width:97.2px;top:671.2px">4.70</div><div class="cell" style="left:1281.2px;width:97.2px;top:671.2px">0.00</div>
<div class="rh" style="top:697.7px">11</div><div class="cell" style="left:279.0px;width:97.3px;top:697.7px">5</div><div class="cell" style="left:379.3px;width:97.2px;top:697.7px">528.10</div><div class="cell" style="left:479.5px;width:97.2px;top:697.7px">50.00</div><div class="cell" style="left:579.7px;width:97.3px;top:697.7px">120.00</div><div class="cell" style="left:680.0px;width:97.2px;top:697.7px">120.00</div><div class="cell" style="left:780.2px;width:97.2px;top:697.7px">0.00</div><div class="cell" style="left:880.4px;width:97.2px;top:697.7px">50.00</div><div class="abs" style="left:1073.3px;top:713.8px;width:1.6px;height:1.6px;background:#8a8a8a;"></div><div class="cell" style="left:1080.8px;width:97.2px;top:697.7px">164.00</div><div class="cell" style="left:1181.0px;width:97.2px;top:697.7px">159.00</div><div class="abs" style="left:1373.9px;top:713.8px;width:1.6px;height:1.6px;background:#8a8a8a;"></div>
<div class="rh" style="top:724.2px">12</div><div class="cell" style="left:279.0px;width:97.3px;top:724.2px">3</div><div class="cell" style="left:379.3px;width:97.2px;top:724.2px">487.00</div><div class="abs" style="left:572.2px;top:740.3px;width:1.6px;height:1.6px;background:#8a8a8a;"></div><div class="cell" style="left:579.7px;width:97.3px;top:724.2px">279.95</div><div class="cell" style="left:680.0px;width:97.2px;top:724.2px">95.40</div><div class="abs" style="left:872.9px;top:740.3px;width:1.6px;height:1.6px;background:#8a8a8a;"></div><div class="cell" style="left:880.4px;width:97.2px;top:724.2px">83.00</div><div class="cell" style="left:980.6px;width:97.2px;top:724.2px">17.00</div><div class="cell" style="left:1080.8px;width:97.2px;top:724.2px">233.58</div><div class="cell" style="left:1181.0px;width:97.2px;top:724.2px">26.67</div><div class="cell" style="left:1281.2px;width:97.2px;top:724.2px">286.54</div>
<div class="rh" style="top:750.7px">13</div><div class="cell" style="left:279.0px;width:97.3px;top:750.7px">5</div><div class="cell" style="left:379.3px;width:97.2px;top:750.7px">58.00</div><div class="cell" style="left:479.5px;width:97.2px;top:750.7px">145.00</div><div class="cell" style="left:579.7px;width:97.3px;top:750.7px">600.00</div><div class="cell" style="left:680.0px;width:97.2px;top:750.7px">600.00</div><div class="abs" style="left:872.9px;top:766.8px;width:1.6px;height:1.6px;background:#8a8a8a;"></div><div class="cell" style="left:880.4px;width:97.2px;top:750.7px">85.00</div><div class="cell" style="left:980.6px;width:97.2px;top:750.7px">15.00</div><div class="cell" style="left:1080.8px;width:97.2px;top:750.7px">1800.00</div><div class="cell" style="left:1181.0px;width:97.2px;top:750.7px">1800.00</div><div class="cell" style="left:1281.2px;width:97.2px;top:750.7px">185.00</div>
<div class="rh" style="top:777.2px">14</div><div class="cell" style="left:279.0px;width:97.3px;top:777.2px">5</div><div class="cell" style="left:379.3px;width:97.2px;top:777.2px">18.35</div><div class="cell" style="left:479.5px;width:97.2px;top:777.2px">0.30</div><div class="cell" style="left:579.7px;width:97.3px;top:777.2px">1.36</div><div class="cell" style="left:680.0px;width:97.2px;top:777.2px">0.30</div><div class="cell" style="left:780.2px;width:97.2px;top:777.2px">0.50</div><div class="abs" style="left:973.1px;top:793.3px;width:1.6px;height:1.6px;background:#8a8a8a;"></div><div class="abs" style="left:1073.3px;top:793.3px;width:1.6px;height:1.6px;background:#8a8a8a;"></div><div class="cell" style="left:1080.8px;width:97.2px;top:777.2px">1.34</div><div class="cell" style="left:1181.0px;width:97.2px;top:777.2px">0.01</div><div class="cell" style="left:1281.2px;width:97.2px;top:777.2px">0.69</div>
<div class="rh" style="top:803.7px">15</div><div class="cell" style="left:279.0px;width:97.3px;top:803.7px">3</div><div class="abs" style="left:472.0px;top:819.8px;width:1.6px;height:1.6px;background:#8a8a8a;"></div><div class="cell" style="left:479.5px;width:97.2px;top:803.7px">1135.48</div><div class="cell" style="left:579.7px;width:97.3px;top:803.7px">1512.18</div><div class="cell" style="left:680.0px;width:97.2px;top:803.7px">1135.48</div><div class="abs" style="left:872.9px;top:819.8px;width:1.6px;height:1.6px;background:#8a8a8a;"></div><div class="cell" style="left:880.4px;width:97.2px;top:803.7px">100.00</div><div class="abs" style="left:1073.3px;top:819.8px;width:1.6px;height:1.6px;background:#8a8a8a;"></div><div class="cell" style="left:1080.8px;width:97.2px;top:803.7px">0.21</div><div class="cell" style="left:1181.0px;width:97.2px;top:803.7px">0.21</div><div class="abs" style="left:1373.9px;top:819.8px;width:1.6px;height:1.6px;background:#8a8a8a;"></div>
<div class="rh" style="top:830.2px">16</div><div class="cell" style="left:279.0px;width:97.3px;top:830.2px">5</div><div class="cell" style="left:379.3px;width:97.2px;top:830.2px">15.35</div><div class="cell" style="left:479.5px;width:97.2px;top:830.2px">2660.68</div><div class="cell" style="left:579.7px;width:97.3px;top:830.2px">839.50</div><div class="abs" style="left:772.7px;top:846.3px;width:1.6px;height:1.6px;background:#8a8a8a;"></div><div class="abs" style="left:872.9px;top:846.3px;width:1.6px;height:1.6px;background:#8a8a8a;"></div><div class="cell" style="left:880.4px;width:97.2px;top:830.2px">20.00</div><div class="cell" style="left:980.6px;width:97.2px;top:830.2px">10.00</div><div class="cell" style="left:1080.8px;width:97.2px;top:830.2px">891.00</div><div class="cell" style="left:1181.0px;width:97.2px;top:830.2px">815.92</div><div class="cell" style="left:1281.2px;width:97.2px;top:830.2px">90000.00</div>
<div class="rh" style="top:856.7px">17</div><div class="cell" style="left:279.0px;width:97.3px;top:856.7px">5</div><div class="cell" style="left:379.3px;width:97.2px;top:856.7px">158.00</div><div class="abs" style="left:572.2px;top:872.8px;width:1.6px;height:1.6px;background:#8a8a8a;"></div><div class="cell" style="left:579.7px;width:97.3px;top:856.7px">18.80</div><div class="cell" style="left:680.0px;width:97.2px;top:856.7px">18.80</div><div class="abs" style="left:872.9px;top:872.8px;width:1.6px;height:1.6px;background:#8a8a8a;"></div><div class="cell" style="left:880.4px;width:97.2px;top:856.7px">100.00</div><div class="abs" style="left:1073.3px;top:872.8px;width:1.6px;height:1.6px;background:#8a8a8a;"></div><div class="cell" style="left:1080.8px;width:97.2px;top:856.7px">35.91</div><div class="cell" style="left:1181.0px;width:97.2px;top:856.7px">17.42</div><div class="cell" style="left:1281.2px;width:97.2px;top:856.7px">91.33</div>
<div class="rh" style="top:883.2px">18</div><div class="cell" style="left:279.0px;width:97.3px;top:883.2px">4</div><div class="cell" style="left:379.3px;width:97.2px;top:883.2px">1529.00</div><div class="cell" style="left:479.5px;width:97.2px;top:883.2px">916.00</div><div class="cell" style="left:579.7px;width:97.3px;top:883.2px">2243.40</div><div class="cell" style="left:680.0px;width:97.2px;top:883.2px">2243.40</div><div class="abs" style="left:872.9px;top:899.3px;width:1.6px;height:1.6px;background:#8a8a8a;"></div><div class="cell" style="left:880.4px;width:97.2px;top:883.2px">85.00</div><div class="cell" style="left:980.6px;width:97.2px;top:883.2px">15.00</div><div class="cell" style="left:1080.8px;width:97.2px;top:883.2px">1304.42</div><div class="cell" style="left:1181.0px;width:97.2px;top:883.2px">1304.42</div><div class="cell" style="left:1281.2px;width:97.2px;top:883.2px">283.79</div>
<div class="rh" style="top:909.7px">19</div><div class="cell" style="left:279.0px;width:97.3px;top:909.7px">5</div><div class="cell" style="left:379.3px;width:97.2px;top:909.7px">1056.80</div><div class="cell" style="left:479.5px;width:97.2px;top:909.7px">568.53</div><div class="cell" style="left:579.7px;width:97.3px;top:909.7px">968.03</div><div class="cell" style="left:680.0px;width:97.2px;top:909.7px">364.50</div><div class="abs" style="left:872.9px;top:925.8px;width:1.6px;height:1.6px;background:#8a8a8a;"></div><div class="cell" style="left:880.4px;width:97.2px;top:909.7px">45.00</div><div class="cell" style="left:980.6px;width:97.2px;top:909.7px">15.00</div><div class="cell" style="left:1080.8px;width:97.2px;top:909.7px">369.20</div><div class="cell" style="left:1181.0px;width:97.2px;top:909.7px">369.20</div><div class="cell" style="left:1281.2px;width:97.2px;top:909.7px">599.32</div>
<div class="rh" style="top:936.2px">20</div><div class="cell" style="left:279.0px;width:97.3px;top:936.2px">5</div><div class="cell" style="left:379.3px;width:97.2px;top:936.2px">301.00</div><div class="cell" style="left:479.5px;width:97.2px;top:936.2px">177.15</div><div class="cell" style="left:579.7px;width:97.3px;top:936.2px">871.65</div><div class="cell" style="left:680.0px;width:97.2px;top:936.2px">871.65</div><div class="abs" style="left:872.9px;top:952.3px;width:1.6px;height:1.6px;background:#8a8a8a;"></div><div class="cell" style="left:880.4px;width:97.2px;top:936.2px">20.00</div><div class="cell" style="left:980.6px;width:97.2px;top:936.2px">40.00</div><div class="cell" style="left:1080.8px;width:97.2px;top:936.2px">69.10</div><div class="abs" style="left:1273.7px;top:952.3px;width:1.6px;height:1.6px;background:#8a8a8a;"></div><div class="abs" style="left:1373.9px;top:952.3px;width:1.6px;height:1.6px;background:#8a8a8a;"></div>
<div class="rh" style="top:962.7px">21</div><div class="cell" style="left:279.0px;width:97.3px;top:962.7px">5</div><div class="cell" style="left:379.3px;width:97.2px;top:962.7px">356.00</div><div class="abs" style="left:572.2px;top:978.8px;width:1.6px;height:1.6px;background:#8a8a8a;"></div><div class="cell" style="left:579.7px;width:97.3px;top:962.7px">8000.00</div><div class="cell" style="left:680.0px;width:97.2px;top:962.7px">1000.00</div><div class="cell" style="left:780.2px;width:97.2px;top:962.7px">7000.00</div><div class="abs" style="left:973.1px;top:978.8px;width:1.6px;height:1.6px;background:#8a8a8a;"></div><div class="cell" style="left:980.6px;width:97.2px;top:962.7px">42.80</div><div class="abs" style="left:1173.5px;top:978.8px;width:1.6px;height:1.6px;background:#8a8a8a;"></div><div class="abs" style="left:1273.7px;top:978.8px;width:1.6px;height:1.6px;background:#8a8a8a;"></div><div class="cell" style="left:1281.2px;width:97.2px;top:962.7px">3000.00</div>
<div class="rh" style="top:989.2px">22</div><div class="cell" style="left:279.0px;width:97.3px;top:989.2px">5</div><div class="cell" style="left:379.3px;width:97.2px;top:989.2px">850.00</div><div class="cell" style="left:479.5px;width:97.2px;top:989.2px">903.00</div><div class="cell" style="left:579.7px;width:97.3px;top:989.2px">2100.00</div><div class="cell" style="left:680.0px;width:97.2px;top:989.2px">1500.00</div><div class="abs" style="left:872.9px;top:1005.3px;width:1.6px;height:1.6px;background:#8a8a8a;"></div><div class="cell" style="left:880.4px;width:97.2px;top:989.2px">100.00</div><div class="abs" style="left:1073.3px;top:1005.3px;width:1.6px;height:1.6px;background:#8a8a8a;"></div><div class="cell" style="left:1080.8px;width:97.2px;top:989.2px">30.00</div><div class="abs" style="left:1273.7px;top:1005.3px;width:1.6px;height:1.6px;background:#8a8a8a;"></div><div class="cell" style="left:1281.2px;width:97.2px;top:989.2px">15.00</div>
<div class="rh" style="top:1015.7px">23</div><div class="cell" style="left:279.0px;width:97.3px;top:1015.7px">2</div><div class="cell" style="left:379.3px;width:97.2px;top:1015.7px">21.00</div><div class="cell" style="left:479.5px;width:97.2px;top:1015.7px">36.40</div><div class="cell" style="left:579.7px;width:97.3px;top:1015.7px">90.00</div><div class="cell" style="left:680.0px;width:97.2px;top:1015.7px">36.00</div><div class="abs" style="left:872.9px;top:1031.8px;width:1.6px;height:1.6px;background:#8a8a8a;"></div><div class="abs" style="left:973.1px;top:1031.8px;width:1.6px;height:1.6px;background:#8a8a8a;"></div><div class="abs" style="left:1073.3px;top:1031.8px;width:1.6px;height:1.6px;background:#8a8a8a;"></div><div class="abs" style="left:1173.5px;top:1031.8px;width:1.6px;height:1.6px;background:#8a8a8a;"></div><div class="abs" style="left:1273.7px;top:1031.8px;width:1.6px;height:1.6px;background:#8a8a8a;"></div><div class="abs" style="left:1373.9px;top:1031.8px;width:1.6px;height:1.6px;background:#8a8a8a;"></div>
<div class="rh" style="top:1042.2px">24</div><div class="cell" style="left:279.0px;width:97.3px;top:1042.2px">4</div><div class="cell" style="left:379.3px;width:97.2px;top:1042.2px">15.00</div><div class="cell" style="left:479.5px;width:97.2px;top:1042.2px">21.50</div><div class="cell" style="left:579.7px;width:97.3px;top:1042.2px">900.00</div><div class="abs" style="left:772.7px;top:1058.3px;width:1.6px;height:1.6px;background:#8a8a8a;"></div><div class="abs" style="left:872.9px;top:1058.3px;width:1.6px;height:1.6px;background:#8a8a8a;"></div><div class="cell" style="left:880.4px;width:97.2px;top:1042.2px">100.00</div><div class="abs" style="left:1073.3px;top:1058.3px;width:1.6px;height:1.6px;background:#8a8a8a;"></div><div class="abs" style="left:1173.5px;top:1058.3px;width:1.6px;height:1.6px;background:#8a8a8a;"></div><div class="abs" style="left:1273.7px;top:1058.3px;width:1.6px;height:1.6px;background:#8a8a8a;"></div><div class="abs" style="left:1373.9px;top:1058.3px;width:1.6px;height:1.6px;background:#8a8a8a;"></div>
<div class="abs" style="left:1399px;top:431px;width:19px;height:637px;background:#dcdce4;border-left:1.5px solid #80848c;border-right:1.5px solid #80848c;box-sizing:border-box;"></div>
<div class="abs" style="left:1400.5px;top:450.5px;width:16px;height:199.5px;background:#c2ced2;border-bottom:2px solid #868a90;box-sizing:border-box;"></div>
<div class="abs" style="left:1400.5px;top:432px;width:16px;height:18.5px;background:#e4e4ea;"></div>
<div class="abs" style="left:1405px;top:544px;width:7px;height:12px;background:repeating-linear-gradient(#98a4aa 0 1px,transparent 1px 3px);opacity:.8;"></div>
<div class="abs" style="left:1404.3px;top:438px;width:0;height:0;border-bottom:4.600px solid #111;border-left:4.2px solid transparent;border-right:4.2px solid transparent;"></div>
<div class="abs" style="left:1400.5px;top:1047px;width:16px;height:20px;background:#e4e4ea;border-top:1.5px solid #868a90;box-sizing:border-box;"></div>
<div class="abs" style="left:1404.3px;top:1057px;width:0;height:0;border-top:4.600px solid #111;border-left:4.2px solid transparent;border-right:4.2px solid transparent;"></div>
<div class="abs" style="left:1416.800px;top:381px;width:1.6px;height:710px;background:#7c8088;"></div>
<div class="abs" style="left:1418px;top:381px;width:10px;height:710px;background:#e2e2e9;"></div>
<div class="abs" style="left:1424.5px;top:383px;width:1.8px;height:706px;background:#90949c;"></div>
<div class="abs" style="left:181px;top:1068px;width:1237px;height:2.5px;background:#8e9298;"></div>
<div class="abs" style="left:182px;top:1070.5px;width:1217px;height:19px;background:#e2e2ea;"></div>
<div class="abs" style="left:280px;top:1070.5px;width:19px;height:18px;background:#e6e6ec;border-right:1px solid #9a9ea6;box-sizing:border-box;"></div>
<div class="abs" style="left:285px;top:1073.5px;width:0;height:0;border-right:6px solid #111;border-top:5px solid transparent;border-bottom:5px solid transparent;"></div>
<div class="abs" style="left:300px;top:1071px;width:18px;height:17px;background:#c6d0d6;border:1px solid #9aa0a8;box-sizing:border-box;"></div>
<div class="abs" style="left:1381px;top:1070.5px;width:18px;height:18px;background:#e6e6ec;border-left:1px solid #9a9ea6;box-sizing:border-box;"></div>
<div class="abs" style="left:1387px;top:1073.5px;width:0;height:0;border-left:6px solid #111;border-top:5px solid transparent;border-bottom:5px solid transparent;"></div>
<div class="abs" style="left:1399px;top:1069px;width:19px;height:21px;background:#e2e2ea;border-left:1.5px solid #80848c;border-right:1.5px solid #80848c;box-sizing:border-box;"></div>
<div class="abs" style="left:180px;top:1091px;width:1249px;height:5px;background:#ececf2;"></div>
<div class="abs" style="left:180px;top:1096px;width:1249px;height:2px;background:#a6a8ae;"></div>
<div class="abs" style="left:180px;top:1098px;width:1249px;height:27px;background:linear-gradient(#b4c8d8 0,#9cbcd6 40%,#5a9cdc 75%,#4088d8 100%);"></div>
<div class="abs" style="left:180px;top:1099px;width:89px;height:25px;background:linear-gradient(#fbe896,#f3d76a);border-right:1px solid #b8a860;box-sizing:border-box;"></div>
<div class="abs" style="left:269px;top:1099px;width:109px;height:25px;background:#e4e4ea;border-right:1.5px solid #b0b0b8;box-sizing:border-box;"></div>
<div class="t" id="dv" style="left:190px;top:1106px;font-size:14px;font-weight:bold;color:#111;">Data View</div>
<div class="t" id="vv" style="left:282px;top:1106px;font-size:13.7px;color:#222;">Variable View</div>
<div class="abs" style="left:180px;top:1125px;width:1249px;height:25px;background:linear-gradient(#f2d8cc 0,#efdcd6 14%,#e4e4ec 30%,#dfe5f0 55%,#dfe6f2 80%,#e8eef8 100%);"></div>
<div class="abs" style="left:180px;top:1125px;width:380px;height:25px;background:linear-gradient(90deg,#e4e4ea 70%,rgba(228,228,234,0));"></div>
<div class="abs" style="left:180px;top:1149px;width:1249px;height:3px;background:linear-gradient(90deg,#5a8a5a 0,#5a8a5a 8%,#4a6cb8 10%,#4068b8 100%);"></div>
<div class="abs" style="left:184px;top:1128px;width:1px;height:20px;background:#8a8a92;"></div>
<div class="t" id="st1" style="left:189px;top:1133px;font-size:12.6px;color:#222;">One-Sample T Test...</div>
<div class="abs" style="left:1117px;top:1128px;width:1px;height:20px;background:#a0a4ac;"></div><div class="abs" style="left:1281px;top:1128px;width:1px;height:20px;background:#a0a4ac;"></div><div class="abs" style="left:1310px;top:1128px;width:1px;height:20px;background:#a0a4ac;"></div><div class="abs" style="left:1339px;top:1128px;width:1px;height:20px;background:#a0a4ac;"></div><div class="abs" style="left:1368px;top:1128px;width:1px;height:20px;background:#a0a4ac;"></div><div class="abs" style="left:1397px;top:1128px;width:1px;height:20px;background:#a0a4ac;"></div><div class="abs" style="left:1416px;top:1128px;width:1px;height:20px;background:#a0a4ac;"></div><div class="t" id="st2" style="left:1121px;top:1133px;font-size:13.1px;color:#222;">SPSS&nbsp; Processor is ready</div>
<div class="abs" style="left:442px;top:320px;width:202px;height:377px;background:#dedee6;border-right:2px solid #868890;border-bottom:2px solid #868890;border-left:1.5px solid #7c808a;box-sizing:border-box;box-shadow:1px 1px 2px rgba(0,0,0,.25);"></div>
<div class="abs" style="left:446px;top:376px;width:190px;height:26px;background:#9cc8f0;"></div>
<div class="mi" style="top:329.5px">Re<u>p</u>orts</div><div class="arr" style="top:331.5px"></div><div class="mi" style="top:356.1px">D<u>e</u>scriptive Statistics</div><div class="arr" style="top:358.1px"></div><div class="mi" style="top:382.6px">Co<u>m</u>pare Means</div><div class="arr" style="top:384.6px"></div><div class="mi" style="top:409.1px"><u>G</u>eneral Linear Model</div><div class="arr" style="top:411.1px"></div><div class="mi" style="top:435.7px"><u>C</u>orrelate</div><div class="arr" style="top:437.7px"></div><div class="mi" style="top:462.2px"><u>R</u>egression</div><div class="arr" style="top:464.2px"></div><div class="mi" style="top:488.8px">Classi<u>f</u>y</div><div class="arr" style="top:490.8px"></div><div class="mi" style="top:515.4px"><u>D</u>ata Reduction</div><div class="arr" style="top:517.4px"></div><div class="mi" style="top:541.9px">Sc<u>a</u>le</div><div class="arr" style="top:543.9px"></div><div class="mi" style="top:568.5px"><u>N</u>onparametric Tests</div><div class="arr" style="top:570.5px"></div><div class="mi" style="top:595.0px">T<u>i</u>me Series</div><div class="arr" style="top:597.0px"></div><div class="mi" style="top:621.5px">M<u>u</u>ltiple Response</div><div class="arr" style="top:623.5px"></div><div class="mi" style="top:648.1px"><u>Q</u>uality Control</div><div class="arr" style="top:650.1px"></div><div class="mi" style="top:674.7px">ROC Cur<u>v</u>e...</div>
<div class="abs" style="left:447px;top:672px;width:17px;height:17px;border:1.5px solid #3a6ab8;background:#d2dff4;box-sizing:border-box;"></div><svg class="abs" style="left:447px;top:672px" width="17" height="17"><path d="M5 14 Q6 5 11 3" stroke="#223" stroke-width="1.3" fill="none"/></svg>
<div class="abs" style="left:636px;top:372px;width:256px;height:139px;background:#dedee6;border-right:2px solid #8c8e96;border-bottom:2px solid #8c8e96;border-left:1.5px solid #9a9ca4;border-top:1.5px solid #9a9ca4;box-sizing:border-box;box-shadow:1px 1px 2px rgba(0,0,0,.25);"></div>
<div class="abs" style="left:638.5px;top:403.5px;width:252px;height:24.5px;background:#9cc8f0;"></div>
<div class="mi2" style="top:382.5px"><u>M</u>eans...</div><div class="mi2" style="top:409.1px">One-<u>S</u>ample T Test...</div><div class="mi2" style="top:435.6px">Independen<u>t</u>-Samples T Test...</div><div class="mi2" style="top:462.1px"><u>P</u>aired-Samples T Test...</div><div class="mi2" style="top:488.7px"><u>O</u>ne-Way ANOVA...</div>
<div class="t" style="left:642px;top:378px;font-size:21.5px;font-weight:bold;color:#d41414;letter-spacing:-0.5px;">M</div>
<svg class="abs" style="left:640px;top:400px" width="24" height="110" viewBox="640 400 24 110">
<!-- one sample -->
<path d="M648.5 412 h3 v1.5 h-0.8 v4 h0.8 v1 h-3 v-1 h0.8 v-4 h-0.8z" fill="#b0207c"/>
<!-- independent -->
<path d="M650 433.5 h2 v2 h2 v1.5 h-2 v4.5 h-2 v-4.5 h-1.5 v-1.500 h1.5z" fill="#181818"/>
<path d="M646 447.500 l3-4.5 h1.500 l-2.5 4.500z M652 443 h1.500 l3 4.500 h-2z" fill="#c83040"/>
<rect x="645.500" y="445.500" width="2.500" height="2.500" fill="#c83040"/><rect x="654" y="445.500" width="2.500" height="2.500" fill="#c83040"/>
<!-- paired -->
<path d="M650 460.500 h2 v2 h2 v1.500 h-2 v4.500 h-2 v-4.500 h-1.500 v-1.500 h1.500z" fill="#181818"/>
<path d="M643 474.500 l4-5 h1.600 l-3.500 5z M653 469.500 h1.600 l3.500 5 h-2z" fill="#d02838"/>
<rect x="641.500" y="471.500" width="2.500" height="2.500" fill="#d02838"/><rect x="655.500" y="472" width="2.500" height="2.500" fill="#d02838"/><rect x="648" y="470.500" width="2" height="2" fill="#d02838"/>
<!-- one way -->
<path d="M646 488 h5 v2 h-3 v2 h2.500 v1.600 h-2.500 v4 h-2z" fill="#181818"/>
<path d="M651.500 496.500 h2.500 l1.500 1.500 v2 l-1.500 1 h-2.500 v-1.200 h2 l0.600 -0.600 v-0.800 l-0.600-0.600 h-2z" fill="#c83040"/>
</svg>

</div>
<div class="abs" style="left:0;top:1223px;width:1585px;height:2px;background:#111;"></div>
</body></html>
